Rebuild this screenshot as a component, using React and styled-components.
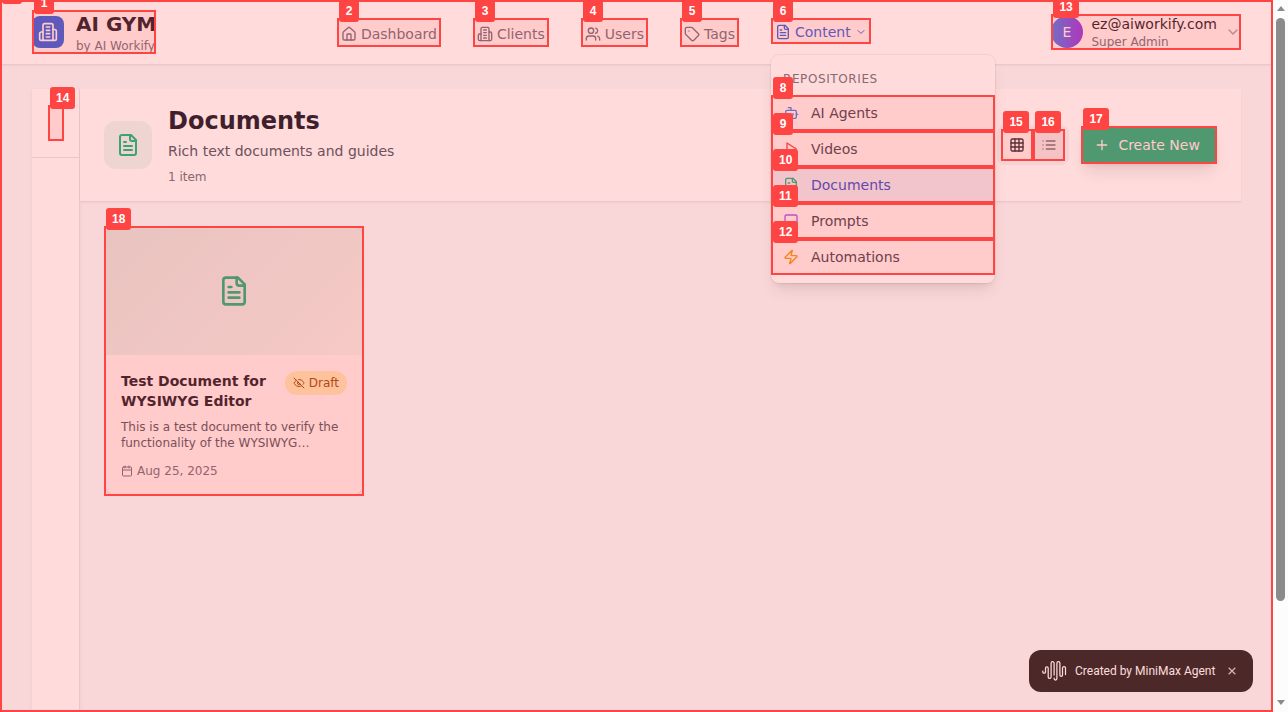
import React from 'react';
import styled, { createGlobalStyle, css } from 'styled-components';

const GlobalStyle = createGlobalStyle`
  *, *::before, *::after { box-sizing: border-box; }
  html, body { margin: 0; padding: 0; height: 100%; overflow: hidden; }
  body { background: #fcfcfc; font-family: 'DejaVu Sans', sans-serif; }
  h1, h2, h3, p { margin: 0; }
  button { font: inherit; border: 0; background: none; padding: 0; text-align: left; }
`;

/* ---------- icons ---------- */

const Svg = styled.svg`
  display: block;
  flex: none;
  fill: none;
  stroke: currentColor;
  stroke-width: 2;
  stroke-linecap: round;
  stroke-linejoin: round;
`;

const paths = {
  building: [
    'M6 22V4a2 2 0 0 1 2-2h8a2 2 0 0 1 2 2v18Z',
    'M6 12H4a2 2 0 0 0-2 2v6a2 2 0 0 0 2 2h2',
    'M18 9h2a2 2 0 0 1 2 2v9a2 2 0 0 1-2 2h-2',
    'M10 6h4', 'M10 10h4', 'M10 14h4', 'M10 18h4',
  ],
  home: [
    'M15 21v-8a1 1 0 0 0-1-1h-4a1 1 0 0 0-1 1v8',
    'M3 10a2 2 0 0 1 .709-1.528l7-5.999a2 2 0 0 1 2.582 0l7 5.999A2 2 0 0 1 21 10v9a2 2 0 0 1-2 2H5a2 2 0 0 1-2-2z',
  ],
  users: [
    'M16 21v-2a4 4 0 0 0-4-4H6a4 4 0 0 0-4 4v2',
    'M9 3a4 4 0 1 0 0 8a4 4 0 1 0 0-8',
    'M22 21v-2a4 4 0 0 0-3-3.87',
    'M16 3.13a4 4 0 0 1 0 7.75',
  ],
  tag: [
    'M12.586 2.586A2 2 0 0 0 11.172 2H4a2 2 0 0 0-2 2v7.172a2 2 0 0 0 .586 1.414l8.704 8.704a2.426 2.426 0 0 0 3.42 0l6.58-6.58a2.426 2.426 0 0 0 0-3.42z',
    'M7.5 7.5h.01',
  ],
  file: [
    'M15 2H6a2 2 0 0 0-2 2v16a2 2 0 0 0 2 2h12a2 2 0 0 0 2-2V7Z',
    'M14 2v4a2 2 0 0 0 2 2h4',
    'M10 9H8', 'M16 13H8', 'M16 17H8',
  ],
  chevron: ['m6 9 6 6 6-6'],
  bot: [
    'M12 8V4H8',
    'M6 8h12a2 2 0 0 1 2 2v8a2 2 0 0 1-2 2H6a2 2 0 0 1-2-2v-8a2 2 0 0 1 2-2z',
    'M2 14h2', 'M20 14h2', 'M15 13v2', 'M9 13v2',
  ],
  play: ['M6 3l14 9-14 9z'],
  message: ['M21 15a2 2 0 0 1-2 2H7l-4 4V5a2 2 0 0 1 2-2h14a2 2 0 0 1 2 2z'],
  zap: ['M4 14a1 1 0 0 1-.78-1.63l9.9-10.2a.5.5 0 0 1 .86.46l-1.92 6.02A1 1 0 0 0 13 10h7a1 1 0 0 1 .78 1.63l-9.9 10.2a.5.5 0 0 1-.86-.46l1.92-6.02A1 1 0 0 0 11 14z'],
  grid: [
    'M5 3h14a2 2 0 0 1 2 2v14a2 2 0 0 1-2 2H5a2 2 0 0 1-2-2V5a2 2 0 0 1 2-2z',
    'M3 9h18', 'M3 15h18', 'M9 3v18', 'M15 3v18',
  ],
  list: ['M8 6h13', 'M8 12h13', 'M8 18h13', 'M3 6h.01', 'M3 12h.01', 'M3 18h.01'],
  plus: ['M5 12h14', 'M12 5v14'],
  eyeOff: [
    'M9.88 9.88a3 3 0 1 0 4.24 4.24',
    'M10.73 5.08A10.43 10.43 0 0 1 12 5c7 0 10 7 10 7a13.16 13.16 0 0 1-1.67 2.68',
    'M6.61 6.61A13.526 13.526 0 0 0 2 12s3 7 10 7a9.74 9.74 0 0 0 5.39-1.61',
    'M2 2l20 20',
  ],
  calendar: [
    'M8 2v4', 'M16 2v4',
    'M5 4h14a2 2 0 0 1 2 2v14a2 2 0 0 1-2 2H5a2 2 0 0 1-2-2V6a2 2 0 0 1 2-2z',
    'M3 10h18',
  ],
};

const Icon = ({ name, size = 16, ...rest }) => (
  <Svg width={size} height={size} viewBox="0 0 24 24" {...rest}>
    {paths[name].map((d) => <path key={d} d={d} />)}
  </Svg>
);

/* ---------- frame ---------- */

const Frame = styled.div`
  position: relative;
  display: flex;
  width: 1288px;
  height: 712px;
  overflow: hidden;
`;

const Page = styled.div`
  position: relative;
  display: flex;
  flex-direction: column;
  width: 1273px;
  height: 712px;
  overflow: hidden;
  background: #f9fafb;
`;

const Scrollbar = styled.div`
  display: flex;
  flex-direction: column;
  align-items: center;
  width: 15px;
  padding: 6px 0 7px;
  background: #fcfcfc;
`;

const Arrow = styled.div`
  border: 4.5px solid transparent;
  ${({ $down }) => ($down
    ? css`border-top: 5px solid #8b8b8b; border-bottom: 0; margin-top: auto;`
    : css`border-bottom: 5px solid #8b8b8b; border-top: 0;`)}
`;

const Thumb = styled.div`
  width: 9px;
  height: 583px;
  margin-top: 7px;
  border-radius: 5px;
  background: #8b8b8b;
`;

/* ---------- header ---------- */

const Header = styled.header`
  position: relative;
  z-index: 2;
  display: flex;
  align-items: center;
  justify-content: space-between;
  flex: none;
  height: 65px;
  padding: 0 32px;
  background: #fff;
  border-bottom: 1px solid #e5e7eb;
  box-shadow: 0 1px 2px rgba(0, 0, 0, 0.05);
`;

const Brand = styled.div`
  display: flex;
  align-items: center;
  gap: 12px;
  width: 124px;
  white-space: nowrap;
`;

const BrandMark = styled.div`
  display: grid;
  place-items: center;
  flex: none;
  width: 32px;
  height: 32px;
  border-radius: 8px;
  background: #2563eb;
  color: #fff;
`;

const BrandName = styled.h1`
  font-size: 20px;
  line-height: 28px;
  font-weight: 700;
  color: #111827;
`;

const Caption = styled.p`
  font-size: 12px;
  line-height: 16px;
  color: #6b7280;
`;

const Nav = styled.nav`
  display: flex;
  align-items: flex-start;
  gap: 32px;
  height: 28px;
  padding-left: 0.6px;
`;

const NavItem = styled.div`
  display: flex;
  align-items: center;
  gap: 4px;
  height: ${({ $active }) => ($active ? '26px' : '30px')};
  padding: 0 4px;
  margin-top: 1px;
  font-size: 14px;
  line-height: 20px;
  color: ${({ $active }) => ($active ? '#2563eb' : '#6b7280')};
`;

const User = styled.div`
  display: flex;
  align-items: center;
  gap: 8px;
  width: 190px;
  white-space: nowrap;
  color: #9ca3af;
`;

const Avatar = styled.div`
  display: grid;
  place-items: center;
  width: 32px;
  height: 32px;
  border-radius: 50%;
  background: linear-gradient(to right, #3b82f6, #9333ea);
  color: #fff;
  font-size: 14px;
  line-height: 20px;
`;

const UserText = styled.div`
  flex: 1;
  padding-left: 0.5px;
`;

const UserName = styled.p`
  font-size: 14px;
  line-height: 20px;
  color: #111827;
`;

/* ---------- content menu ---------- */

const Menu = styled.div`
  position: absolute;
  z-index: 3;
  left: 771px;
  top: 55px;
  width: 224px;
  padding: 8px 0;
  border-radius: 8px;
  background: #fff;
  box-shadow: 0 0 0 1px rgba(0, 0, 0, 0.05), 0 10px 15px -3px rgba(0, 0, 0, 0.1), 0 4px 6px -4px rgba(0, 0, 0, 0.1);
`;

const MenuTitle = styled.p`
  padding: 8px 12px;
  font-size: 12px;
  line-height: 16px;
  letter-spacing: 0.6px;
  color: #6b7280;
`;

const MenuItem = styled.div`
  display: flex;
  align-items: center;
  gap: 12px;
  padding: 8px 12px;
  font-size: 14px;
  line-height: 20px;
  color: ${({ $active }) => ($active ? '#1d4ed8' : '#374151')};
  background: ${({ $active }) => ($active ? '#eff6ff' : 'transparent')};
  & > svg { color: ${({ $tint }) => $tint}; }
`;

/* ---------- workspace ---------- */

const Workspace = styled.main`
  display: flex;
  flex: 1;
  min-height: 0;
  padding: 24px 32px 0;
`;

const Rail = styled.aside`
  flex: none;
  width: 48px;
  background: #fff;
  border-right: 1px solid #e5e7eb;
  box-shadow: 0 1px 3px rgba(0, 0, 0, 0.08);
`;

const RailTop = styled.div`
  height: 69px;
  border-bottom: 1px solid #e5e7eb;
`;

const Content = styled.section`
  flex: 1;
  min-width: 0;
`;

const ContentHeader = styled.div`
  display: flex;
  align-items: center;
  padding: 16px 24px;
  background: #fff;
  border-bottom: 1px solid #e5e7eb;
  box-shadow: 0 1px 2px rgba(0, 0, 0, 0.05);
`;

const TypeBadge = styled.div`
  display: grid;
  place-items: center;
  width: 48px;
  height: 48px;
  margin-right: 16px;
  border-radius: 12px;
  background: #10b98115;
  color: #10b981;
`;

const Title = styled.h2`
  font-size: 24px;
  line-height: 32px;
  font-weight: 700;
  color: #111827;
`;

const Subtitle = styled.p`
  margin: 4px 0 8px;
  font-size: 14px;
  line-height: 20px;
  color: #4b5563;
`;

const ViewToggle = styled.div`
  display: flex;
  margin-left: auto;
  margin-right: 12px;
  padding: 4px;
  border-radius: 8px;
  background: #f3f4f6;
`;

const ViewButton = styled.button`
  display: grid;
  place-items: center;
  width: 32px;
  height: 32px;
  border-radius: 6px;
  color: ${({ $active }) => ($active ? '#1f2937' : '#6b7280')};
  background: ${({ $active }) => ($active ? '#fff' : 'transparent')};
`;

const CreateButton = styled.button`
  display: flex;
  align-items: center;
  gap: 8px;
  height: 38px;
  width: 136px;
  padding: 0 0 0 13.4px;
  border-radius: 8px;
  background: #10b981;
  color: #fff;
  font-size: 14px;
  line-height: 20px;
  white-space: nowrap;
  box-shadow: 0 10px 15px -3px rgba(0, 0, 0, 0.1), 0 4px 6px -4px rgba(0, 0, 0, 0.1);
`;

const CardGrid = styled.div`
  display: flex;
  padding: 24px;
`;

const Card = styled.article`
  width: 260px;
  border: 1px solid #e5e7eb;
  border-radius: 12px;
  overflow: hidden;
  background: #fff;
`;

const Cover = styled.div`
  display: grid;
  place-items: center;
  height: 128px;
  color: #10b981;
  background: linear-gradient(135deg, #10b98120, #10b9810c);
`;

const CardBody = styled.div`
  padding: 16px;
`;

const CardHead = styled.div`
  display: flex;
  align-items: flex-start;
  justify-content: space-between;
`;

const CardTitle = styled.h3`
  width: 150px;
  font-size: 14px;
  line-height: 20px;
  font-weight: 700;
  color: #111827;
`;

const Status = styled.span`
  display: flex;
  align-items: center;
  gap: 4px;
  padding: 4px 8px;
  border-radius: 12px;
  background: #fef5bf;
  color: #944d0b;
  font-size: 12px;
  line-height: 16px;
`;

const Summary = styled.p`
  margin: 8px 0 12px;
  font-size: 12px;
  line-height: 16px;
  color: #4b5563;
  white-space: nowrap;
`;

const Meta = styled.div`
  display: flex;
  align-items: center;
  gap: 4px;
  font-size: 12px;
  line-height: 16px;
  color: #6b7280;
`;

/* ---------- agent credit ---------- */

const Credit = styled.div`
  position: absolute;
  z-index: 4;
  left: 1029px;
  top: 650px;
  display: flex;
  align-items: center;
  width: 224px;
  height: 42px;
  padding: 0 16px 0 13px;
  border-radius: 12px;
  background: #222222;
  color: #fff;
  font: 400 12px/16px Roboto, sans-serif;
  white-space: nowrap;
`;

const CreditText = styled.span`
  margin-left: 8px;
`;

const CreditClose = styled.span`
  display: flex;
  margin-left: auto;
  color: #ccc;
`;

/* ---------- element markers ---------- */

const Markers = styled.div`
  position: absolute;
  z-index: 5;
  inset: 0;
  overflow: hidden;
`;

const Marker = styled.div`
  position: absolute;
  left: ${({ $r }) => $r[0]}px;
  top: ${({ $r }) => $r[1]}px;
  width: ${({ $r }) => $r[2]}px;
  height: ${({ $r }) => $r[3]}px;
  border: 2px solid #ff4444;
  background: rgba(255, 68, 68, 0.1);
`;

const MarkerLabel = styled.span`
  position: absolute;
  left: 0;
  top: -20px;
  min-width: 20px;
  height: 22px;
  padding: 0 6px;
  border-radius: 3px;
  background: #ff4444;
  color: #fff;
  font: 700 12px/22px 'Liberation Sans', sans-serif;
  text-align: center;
`;

const Tint = styled.div`
  position: absolute;
  inset: 0;
  background: rgba(255, 68, 68, 0.1);
`;

const navItems = [
  ['home', 'Dashboard'],
  ['building', 'Clients'],
  ['users', 'Users'],
  ['tag', 'Tags'],
];

const menuItems = [
  ['bot', 'AI Agents', '#3b82f6'],
  ['play', 'Videos', '#ef4444'],
  ['file', 'Documents', '#10b981'],
  ['message', 'Prompts', '#a855f7'],
  ['zap', 'Automations', '#f59e0b'],
];

const markers = [
  [0, [0, 0, 1273, 712]],
  [1, [32, 10, 124, 44]],
  [2, [337, 18, 104, 29]],
  [3, [473, 18, 76, 29]],
  [4, [581, 18, 67, 29]],
  [5, [680, 18, 59, 29]],
  [6, [771, 18, 100, 26]],
  [8, [771, 95, 224, 36]],
  [9, [771, 131, 224, 36]],
  [10, [771, 167, 224, 36]],
  [11, [771, 203, 224, 36]],
  [12, [771, 239, 224, 36]],
  [13, [1051.4, 14, 189.6, 36]],
  [14, [48, 105, 16, 36]],
  [15, [1001.4, 129, 32, 32]],
  [16, [1033.4, 129, 32, 32]],
  [17, [1081.4, 126, 135.6, 38]],
  [18, [104, 226, 260, 270]],
];

export default function App() {
  return (
    <Frame>
      <GlobalStyle />
      <Page>
        <Header>
          <Brand>
            <BrandMark><Icon name="building" size={20} /></BrandMark>
            <div>
              <BrandName>AI GYM</BrandName>
              <Caption>by AI Workify</Caption>
            </div>
          </Brand>
          <Nav>
            {navItems.map(([icon, label]) => (
              <NavItem key={label}><Icon name={icon} />{label}</NavItem>
            ))}
            <NavItem $active>
              <Icon name="file" />Content<Icon name="chevron" size={12} />
            </NavItem>
          </Nav>
          <User>
            <Avatar>E</Avatar>
            <UserText>
              <UserName>ez@aiworkify.com</UserName>
              <Caption>Super Admin</Caption>
            </UserText>
            <Icon name="chevron" />
          </User>
        </Header>

        <Menu>
          <MenuTitle>REPOSITORIES</MenuTitle>
          {menuItems.map(([icon, label, tint]) => (
            <MenuItem key={label} $tint={tint} $active={label === 'Documents'}>
              <Icon name={icon} />{label}
            </MenuItem>
          ))}
        </Menu>

        <Workspace>
          <Rail><RailTop /></Rail>
          <Content>
            <ContentHeader>
              <TypeBadge><Icon name="file" size={24} /></TypeBadge>
              <div>
                <Title>Documents</Title>
                <Subtitle>Rich text documents and guides</Subtitle>
                <Caption>1 item</Caption>
              </div>
              <ViewToggle>
                <ViewButton $active><Icon name="grid" /></ViewButton>
                <ViewButton><Icon name="list" /></ViewButton>
              </ViewToggle>
              <CreateButton><Icon name="plus" />Create New</CreateButton>
            </ContentHeader>
            <CardGrid>
              <Card>
                <Cover><Icon name="file" size={32} /></Cover>
                <CardBody>
                  <CardHead>
                    <CardTitle>Test Document for WYSIWYG Editor</CardTitle>
                    <Status><Icon name="eyeOff" size={12} />Draft</Status>
                  </CardHead>
                  <Summary>
                    This is a test document to verify the<br />functionality of the WYSIWYG…
                  </Summary>
                  <Meta><Icon name="calendar" size={12} />Aug 25, 2025</Meta>
                </CardBody>
              </Card>
            </CardGrid>
          </Content>
        </Workspace>

        <Credit>
          <svg width="25" height="22" viewBox="0 0 25 22" fill="none" stroke="#fff" strokeWidth="1.25" strokeLinecap="round">
            <path d="M.8 11v.9a1.35 1.35 0 0 0 2.7 0V8.3a1.35 1.35 0 0 1 2.7 0V17a1.45 1.45 0 0 0 2.9 0V3.2a1.5 1.5 0 0 1 3 0V15" />
            <path d="M12.1 18v.6a1.4 1.4 0 0 0 2.8 0V3.2a1.5 1.5 0 0 1 3 0V15a1.3 1.3 0 0 0 2.6 0V8a1.5 1.5 0 0 1 3 0v6.5" />
          </svg>
          <CreditText>Created by MiniMax Agent</CreditText>
          <CreditClose>
            <svg width="10" height="10" viewBox="0 0 10 10" stroke="currentColor" strokeWidth="1.3">
              <path d="M1.7 1.7l6.6 6.6M8.3 1.7l-6.6 6.6" />
            </svg>
          </CreditClose>
        </Credit>

        <Markers>
          <Tint />
          {markers.map(([n, rect]) => (
            <Marker key={n} $r={rect}><MarkerLabel>{n}</MarkerLabel></Marker>
          ))}
        </Markers>
      </Page>
      <Scrollbar>
        <Arrow />
        <Thumb />
        <Arrow $down />
      </Scrollbar>
    </Frame>
  );
}
